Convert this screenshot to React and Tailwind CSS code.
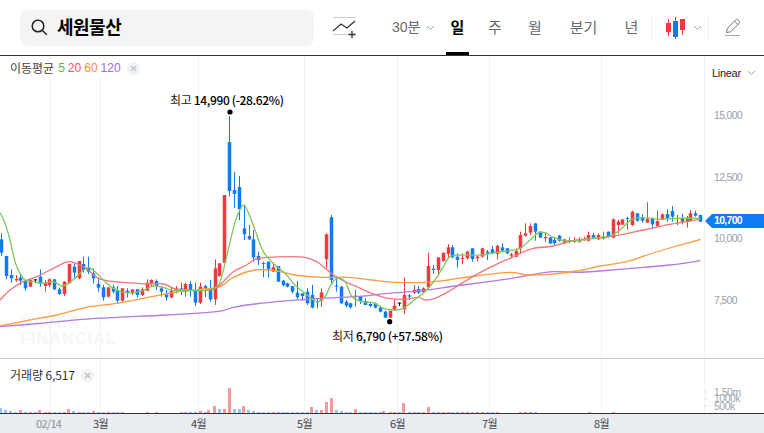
import React from "react";

const S = [[0, 200], [255, 200], [510, 190]];
const conv = (seg, pts) => pts.map(([x, y]) => [S[seg][0] + x / 3, S[seg][1] + y / 3]);

const raw = [
  [[3,100,168,118,158,"b"],[19,168,238,168,228,"b"],[34,208,248,225,235,"b"],[47,225,245,237,241,"r"],[61,220,255,233,242,"b"],[76,240,272,242,265,"b"],[91,235,262,240,260,"r"],[106,238,250,238,241,"k"],[121,208,260,230,252,"b"],[136,240,275,248,258,"r"],[148,235,262,238,255,"r"],[163,238,270,238,268,"b"],[178,263,285,268,282,"b"],[193,243,288,245,282,"r"],[208,192,250,192,250,"r"],[223,190,235,200,218,"b"],[238,183,238,183,235,"r"],[250,170,218,192,210,"b"],[265,170,222,202,215,"b"],[280,205,250,220,235,"b"],[295,235,275,252,263,"b"],[310,255,302,262,292,"b"],[325,262,292,262,290,"r"],[340,255,280,262,275,"b"],[352,258,310,272,302,"b"],[367,265,305,265,302,"r"],[382,265,292,272,278,"b"],[397,268,285,268,280,"r"],[412,268,292,268,285,"b"],[427,262,288,268,285,"r"],[442,238,272,248,272,"r"],[454,238,258,240,250,"r"],[469,238,270,243,258,"b"],[484,258,290,265,275,"b"],[499,270,302,283,292,"b"],[514,262,295,272,292,"r"],[529,258,280,265,272,"r"],[544,248,285,265,268,"b"],[556,248,290,252,275,"r"],[571,243,290,252,270,"b"],[586,248,318,270,308,"b"],[601,248,312,260,308,"r"],[616,255,292,258,265,"b"],[631,240,305,265,298,"b"],[646,178,315,205,298,"r"],[658,190,230,190,228,"r"],[673,-15,188,-15,188,"r"],[688,-252,-10,-174,-27,"b"],[703,-84,24,-30,-18,"b"],[718,-72,60,-39,27,"b"],[733,15,120,85,103,"b"],[748,75,120,108,118,"b"],[760,90,185,118,172,"b"]],
  [[10,155,195,168,180,"b"],[25,185,232,189,192,"b"],[40,185,232,185,208,"b"],[55,187,215,202,215,"r"],[70,198,245,198,245,"b"],[85,240,260,242,255,"b"],[97,248,262,250,260,"b"],[112,258,280,258,275,"b"],[127,243,298,278,292,"b"],[142,280,302,280,288,"b"],[157,265,315,275,310,"b"],[172,255,325,285,323,"b"],[187,295,325,304,307,"b"],[199,265,320,277,302,"r"],[214,100,205,103,178,"r"],[229,45,252,52,240,"b"],[244,228,275,257,260,"b"],[259,258,312,260,310,"b"],[274,300,322,305,317,"b"],[286,308,326,310,322,"b"],[301,270,320,287,290,"r"],[316,288,312,288,303,"b"],[331,295,315,303,315,"b"],[346,308,322,312,318,"b"],[361,308,325,310,323,"b"],[376,320,337,323,335,"b"],[389,332,353,335,353,"b"],[404,332,353,332,353,"r"],[418,300,332,317,330,"r"],[433,308,318,308,311,"k"],[448,232,342,285,328,"r"],[463,282,300,286,290,"b"],[478,255,282,270,278,"r"],[490,258,282,267,278,"b"],[505,262,280,265,276,"r"],[520,158,265,198,262,"r"],[535,195,222,206,210,"b"],[550,172,222,172,210,"r"],[565,158,185,158,183,"r"],[580,132,172,142,162,"r"],[592,135,175,142,172,"b"],[607,160,203,170,180,"b"],[622,160,192,174,177,"r"],[637,152,178,155,175,"r"],[652,145,185,145,177,"b"],[667,168,185,170,175,"r"],[682,143,172,145,170,"r"],[695,150,180,155,160,"b"],[710,138,162,148,160,"b"],[725,135,178,137,162,"r"],[740,130,155,142,152,"b"],[755,145,162,145,160,"b"]],
  [[3,188,205,193,197,"r"],[18,175,202,183,200,"r"],[31,125,190,135,175,"r"],[46,100,140,130,137,"r"],[61,100,135,108,128,"r"],[76,100,152,100,125,"b"],[91,125,143,125,143,"b"],[106,128,155,141,145,"r"],[121,142,162,142,160,"b"],[133,140,165,150,160,"b"],[148,135,155,137,152,"b"],[163,148,162,148,158,"r"],[178,142,160,151,154,"r"],[193,142,158,150,155,"r"],[208,142,158,148,155,"r"],[222,140,152,148,151,"r"],[235,125,155,135,152,"r"],[250,128,148,135,143,"b"],[265,130,150,135,148,"r"],[280,125,148,140,146,"r"],[295,125,142,125,140,"b"],[310,85,145,88,143,"r"],[325,90,130,95,105,"r"],[337,88,105,88,104,"r"],[352,80,118,84,87,"b"],[367,62,108,65,105,"r"],[382,70,95,70,92,"b"],[397,72,98,82,92,"b"],[412,37,98,87,98,"r"],[427,82,118,87,103,"b"],[440,62,110,93,108,"r"],[455,70,90,73,88,"r"],[470,58,95,72,85,"b"],[485,48,95,63,80,"b"],[500,75,105,84,87,"b"],[515,72,103,85,95,"b"],[530,78,113,85,95,"r"],[541,60,95,70,92,"r"],[556,62,80,70,77,"b"],[571,75,95,75,95,"b"]],
];

const candles = raw.flatMap((list, i) =>
  list.map(([zx, wt, wb, bt, bb, c]) => ({
    x: Math.round(S[i][0] + zx / 3),
    wt: S[i][1] + wt / 3,
    wb: S[i][1] + wb / 3,
    bt: S[i][1] + bt / 3,
    bb: S[i][1] + bb / 3,
    c,
  }))
);

const green = [
  ...conv(0, [[0,38],[15,70],[30,120],[45,185],[60,220],[75,240],[100,245],[130,250],[160,245],[185,258],[205,250],[225,235],[245,215],[265,203],[285,215],[310,240],[340,265],[380,278],[420,275],[460,258],[490,262],[520,272],[560,270],[600,272],[640,265],[660,245],[680,170],[700,85],[715,40],[732,15],[750,50]]),
  ...conv(1, [[0,90],[25,155],[60,195],[90,220],[120,255],[150,280],[185,305],[210,290],[225,260],[245,235],[270,245],[290,288],[320,305],[355,308],[385,325],[420,330],[445,325],[480,298],[510,275],[540,240],[565,200],[585,170],[620,165],[680,165],[720,158]]),
  ...conv(2, [[0,182],[30,175],[60,150],[85,128],[105,128],[130,142],[160,152],[200,152],[250,145],[300,138],[330,120],[365,88],[400,83],[450,88],[500,85],[570,85]]),
];
const red = [
  ...conv(0, [[0,300],[30,270],[70,245],[110,230],[150,210],[190,190],[210,185],[240,195],[265,210],[290,232],[320,242],[380,248],[440,252],[490,252],[530,268],[600,272],[640,268],[665,250],[700,215],[740,195]]),
  ...conv(1, [[0,178],[40,172],[100,170],[150,172],[185,185],[205,200],[235,225],[270,245],[310,262],[350,280],[400,295],[450,298],[490,292],[510,300],[540,295],[580,275],[620,250],[680,215],[730,190]]),
  ...conv(2, [[0,205],[30,190],[70,175],[130,168],[200,150],[300,140],[400,120],[480,103],[570,88]]),
];
const orange = [
  ...conv(0, [[0,378],[80,362],[170,345],[260,322],[350,310],[430,295],[520,278],[600,268],[660,260],[700,232]]),
  ...conv(1, [[0,210],[60,212],[120,225],[200,232],[280,232],[350,240],[420,247],[510,247]]),
  ...conv(1, [[580,240],[660,228]]),
  ...conv(2, [[0,247],[50,255],[120,253],[200,243],[270,228],[350,215],[420,192],[500,168],[572,148]]),
];
const purple = [
  ...conv(0, [[0,380],[120,370],[250,358],[350,352],[500,345],[650,335],[700,322]]),
  ...conv(1, [[0,312],[100,302],[200,295],[300,290],[400,280],[500,272],[600,258],[700,245]]),
  ...conv(2, [[0,266],[60,255],[130,245],[200,247],[270,243],[400,232],[480,225],[572,212]]),
];

function smooth(p) {
  let d = `M${p[0][0]} ${p[0][1]}`;
  for (let i = 0; i < p.length - 1; i++) {
    const a = p[Math.max(i - 1, 0)], b = p[i], c = p[i + 1], e = p[Math.min(i + 2, p.length - 1)];
    const c1x = b[0] + (c[0] - a[0]) / 6, c1y = b[1] + (c[1] - a[1]) / 6;
    const c2x = c[0] - (e[0] - b[0]) / 6, c2y = c[1] - (e[1] - b[1]) / 6;
    d += `C${c1x} ${c1y} ${c2x} ${c2y} ${c[0]} ${c[1]}`;
  }
  return d;
}

const COL = { r: "#ef3a3e", b: "#0d7bf1", k: "#111111" };
const GRID = [50, 100, 198, 304, 397, 489, 601, 704];

const VR = "#f6989d";
const VB = "#97c4f8";
const big = [
  [0,5,VB],[5,3,VB],[10,2,VB],[15,1,VB],[20,3,VR],[39,3,VR],[68,4,VR],[73,2,VB],[93,2,VR],
  [147,1,VR],[156,1,VR],[200,2,VR],[208,3,VR],[214,7,VR],[219,4,VB],[224,4,VR],[229,25,VR],[234,4,VB],[239,4,VB],[243,7,VR],[248,3,VB],[253,2,VB],
  [311,6,VR],[316,3,VB],[321,3,VR],[326,11,VR],[331,15,VR],[336,3,VB],[341,2,VB],[355,4,VR],[383,2,VR],[403,10,VR],[428,6,VR],[589,1,VR],[613,1,VR],
];
const isQuiet = (x) => (x > 124 && x < 178) || (x > 497 && x < 519) || x > 537;
const volumes = [
  ...candles
    .filter((c) => !isQuiet(c.x) && !big.some((b) => Math.abs(b[0] - c.x) < 3))
    .map((c) => ({ x: c.x, h: 1, c: c.c === "r" ? VR : VB })),
  ...big.map(([x, h, c]) => ({ x, h, c })),
];

const sans = "font-['Noto_Sans_CJK_KR','Noto_Sans',sans-serif]";
const arial = "font-['Liberation_Sans','Noto_Sans_CJK_KR',sans-serif]";

function Chevron({ className = "" }) {
  return (
    <svg width="9" height="6" viewBox="0 0 9 6" className={className}>
      <path d="M1 1l3.5 3.5L8 1" fill="none" stroke="#a3a8b0" strokeWidth="1" />
    </svg>
  );
}

function CloseDot({ className = "" }) {
  return (
    <span className={`flex items-center justify-center w-[13px] h-[13px] rounded-full bg-[#f1f2f4] ${className}`}>
      <svg width="7" height="7" viewBox="0 0 7 7">
        <path d="M1 1l5 5M6 1l-5 5" stroke="#bcc0c6" strokeWidth="1.1" />
      </svg>
    </span>
  );
}

function GridLines({ y1, y2 }) {
  return GRID.map((x) => (
    <line key={x} x1={x + 0.5} x2={x + 0.5} y1={y1} y2={y2} stroke="#f0f2f6" strokeWidth="1" />
  ));
}

function Tab({ children, w, active }) {
  return (
    <div className={`relative flex items-center justify-center h-[55px] ${w} text-[15px] ${active ? "font-bold text-black" : "text-[#666b73]"}`}>
      {children}
      {active && <span className="absolute left-0 right-0 bottom-0 h-[3px] bg-black" />}
    </div>
  );
}

function Header() {
  return (
    <header className={`flex items-center h-[56px] border-b border-[#333] pl-5 ${sans}`}>
      <div className="flex items-center w-[294px] h-[36px] rounded-lg bg-[#f3f4f6] pl-[11px]">
        <svg width="17" height="17" viewBox="0 0 17 17">
          <circle cx="7" cy="7" r="5.8" fill="none" stroke="#222" strokeWidth="1.5" />
          <path d="M11.2 11.2l4.6 4.6" stroke="#222" strokeWidth="1.5" />
        </svg>
        <span className="ml-[9px] -mt-[3px] text-[18px] tracking-[-0.5px] font-bold text-black leading-none">세원물산</span>
      </div>
      <svg width="24" height="22" viewBox="0 0 24 22" className="ml-[19px]">
        <path d="M0 .5h23M0 17.5h14" stroke="#c9ccd1" strokeWidth="1" />
        <path d="M0 14l8-7 6 4 8-7" fill="none" stroke="#333" strokeWidth="1.3" />
        <path d="M19 14v7M15.5 17.5h7" stroke="#333" strokeWidth="1.3" />
      </svg>
      <div className={`ml-[35px] flex items-center h-[55px] w-[54px] text-[14px] text-[#666b73] ${arial}`}>
        <span>30분</span>
        <Chevron className="ml-[6px]" />
      </div>
      <Tab w="w-[23px]" active>일</Tab>
      <div className="w-[6px]" />
      <Tab w="w-[40px]">주</Tab>
      <Tab w="w-[40px]">월</Tab>
      <Tab w="w-[57px]">분기</Tab>
      <Tab w="w-[39px]">년</Tab>
      <span className="w-px h-[28px] bg-[#f0f1f3]" />
      <svg width="20" height="22" viewBox="0 0 20 22" className="ml-[14px]">
        <path d="M2.5 2v17" stroke="#ef3a3e" />
        <rect x="0" y="6" width="5" height="9" fill="#ef3a3e" />
        <path d="M9.5 0v22" stroke="#0d7bf1" />
        <rect x="7" y="4" width="5" height="16" fill="#0d7bf1" />
        <path d="M16.5 2v16" stroke="#ef3a3e" />
        <rect x="14" y="2" width="5" height="11" fill="#ef3a3e" />
      </svg>
      <Chevron className="ml-[7px]" />
      <span className="ml-[6px] w-px h-[28px] bg-[#f0f1f3]" />
      <svg width="16" height="19" viewBox="0 0 16 19" className="ml-[16px]">
        <path d="M1.5 14.5l.8-4L10.5 2c.8-.8 1.9-.8 2.6 0l.9.9c.7.7.7 1.8 0 2.5L5.5 13.8z" fill="none" stroke="#777" strokeWidth="1" />
        <path d="M9.5 3.2l3.5 3.5" stroke="#777" strokeWidth="1" />
        <path d="M0 17.5h15" stroke="#aaa" strokeWidth="1" />
      </svg>
    </header>
  );
}

function PriceChart() {
  return (
    <section className={`relative h-[302px] ${sans}`}>
      <div className={`absolute left-[20px] top-[259px] text-[16px] leading-[16px] font-bold tracking-[1.2px] text-[#f5f6f8] ${arial}`}>
        <div>NAVER</div>
        <div>FINANCIAL</div>
      </div>

      <svg width="764" height="302" viewBox="0 56 764 302" className="relative block">
        <GridLines y1={56} y2={358} />
        {candles.map((c, i) => (
          <g key={i} fill={COL[c.c]}>
            <rect x={c.x} y={c.wt} width="1" height={Math.max(c.wb - c.wt, 1)} />
            <rect x={c.x - 1.25} y={c.bt} width="3.5" height={Math.max(c.bb - c.bt, 1)} />
          </g>
        ))}
        <path d={smooth(purple)} fill="none" stroke="#b07be2" strokeWidth="1.3" />
        <path d={smooth(orange)} fill="none" stroke="#ff9a42" strokeWidth="1.3" />
        <path d={smooth(red)} fill="none" stroke="#f2767a" strokeWidth="1.3" />
        <path d={smooth(green)} fill="none" stroke="#7cc95c" strokeWidth="1.3" />
        <circle cx="230" cy="112" r="2.6" fill="#000" />
        <circle cx="389.7" cy="321.7" r="2.6" fill="#000" />
      </svg>

      <div className="absolute left-[10px] top-[3px] flex items-center text-[12px] text-[#444] bg-white">
        <span className="mr-[4px]">이동평균</span>
        <span className={`${arial} text-[#62b83d] mr-[3px]`}>5</span>
        <span className={`${arial} text-[#f4565a] mr-[3px]`}>20</span>
        <span className={`${arial} text-[#ff9029] mr-[3px]`}>60</span>
        <span className={`${arial} text-[#a965e2]`}>120</span>
        <CloseDot className="ml-[6px]" />
      </div>

      <div className="absolute left-[170px] top-[35px] text-[12px] leading-[18px] text-[#222] whitespace-nowrap tracking-[-0.35px]">
        최고 <span className="font-medium text-black">14,990 (-28.62%)</span>
      </div>
      <div className="absolute left-[332px] top-[271px] text-[12px] leading-[18px] text-[#222] whitespace-nowrap tracking-[-0.3px]">
        최저 <span className="font-medium text-black">6,790 (+57.58%)</span>
      </div>

      <div className={`absolute left-[712px] top-[9px] flex items-center text-[11px] tracking-[-0.3px] leading-[16px] text-[#222] ${arial}`}>
        Linear
        <Chevron className="ml-[6px]" />
      </div>

      {[["15,000", 51], ["12,500", 113], ["10,000", 174], ["7,500", 236]].map(([t, y]) => (
        <span key={t} style={{ top: y }} className={`absolute left-[714px] text-[10.5px] tracking-[-0.7px] leading-[16px] text-[#9aa0a8] ${arial}`}>{t}</span>
      ))}

      <div className={`absolute left-[705px] top-[158px] flex items-center h-[14px] ${arial}`}>
        <span className="w-0 h-0 border-y-[7px] border-y-transparent border-r-[7px] border-r-[#0d7bf1]" />
        <span className="flex items-center w-[52px] h-[14px] bg-[#0d7bf1] pl-[2px] text-[10.5px] tracking-[-0.7px] font-bold text-white">10,700</span>
      </div>
    </section>
  );
}

function VolumeChart() {
  return (
    <section className={`relative h-[56px] border-t border-[#c4c9d1] ${sans}`}>
      <svg width="764" height="55" viewBox="0 359 764 55" className="block">
        <GridLines y1={359} y2={413} />
        {volumes.map((v, i) => (
          <rect key={i} x={v.x - 1} y={413 - v.h} width="3" height={v.h} fill={v.c} />
        ))}
        <path d="M704 392h4M704 399h4M704 406h4" stroke="#e3e5e9" />
      </svg>
      <div className="absolute left-[10px] top-[7px] flex items-center text-[12px] leading-[18px] text-[#333] tracking-[-0.1px]">
        거래량 6,517
        <CloseDot className="ml-[6px]" />
      </div>
      {[["1.50m", 27], ["1000k", 33], ["500k", 41]].map(([t, y]) => (
        <span key={t} style={{ top: y }} className={`absolute left-[714px] text-[10.5px] tracking-[-0.5px] leading-[13px] text-[#a2a7ae] ${arial}`}>{t}</span>
      ))}
      <div className="absolute left-0 right-0 bottom-0 h-px bg-[#333]" />
    </section>
  );
}

function DateAxis() {
  const items = [["02/14", 36, "text-[#8b9199] tracking-[-0.7px]"], ["3월", 93], ["4월", 191], ["5월", 297], ["6월", 390], ["7월", 482], ["8월", 594]];
  return (
    <footer className={`relative h-[19px] bg-[#e9ecf1] ${sans}`}>
      {items.map(([t, x, c]) => (
        <span key={t} style={{ left: x }} className={`absolute top-0 text-[11px] leading-[18px] ${c || "text-[#444] tracking-[-0.5px]"}`}>{t}</span>
      ))}
    </footer>
  );
}

export default function App() {
  return (
    <div className="w-[764px] h-[433px] overflow-hidden bg-white flex flex-col">
      <Header />
      <PriceChart />
      <VolumeChart />
      <DateAxis />
    </div>
  );
}
